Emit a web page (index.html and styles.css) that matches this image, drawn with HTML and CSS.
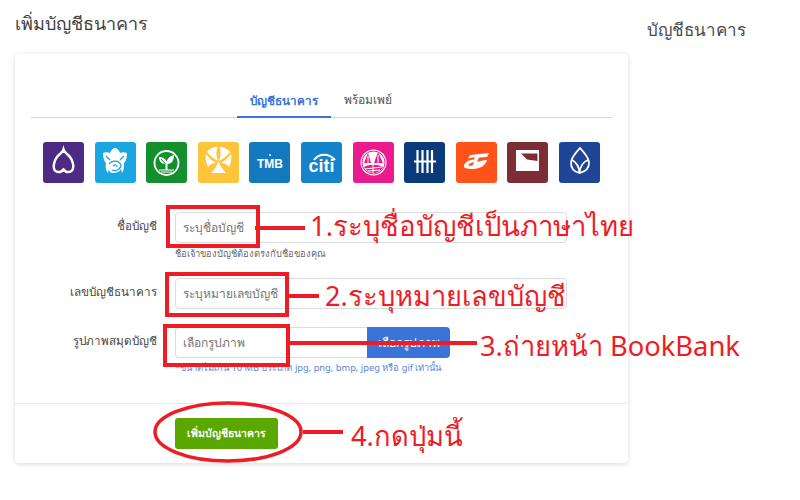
FILE: index.html
```html
<!DOCTYPE html>
<html lang="th">
<head>
<meta charset="utf-8">
<title>เพิ่มบัญชีธนาคาร</title>
<link rel="stylesheet" href="styles.css">
</head>
<body>
<div class="page">
  <main class="main">
    <h1 class="title">เพิ่มบัญชีธนาคาร</h1>
    <section class="card">
      <div class="card-body">
        <nav class="tabs">
          <a class="tab tab-active">บัญชีธนาคาร</a>
          <a class="tab tab-next">พร้อมเพย์</a>
        </nav>
        <div class="banks">
          <div class="bank b-scb"><svg viewBox="0 0 41 41"><path class="ol" d="M20.500 7.500 C21.500 11 25 12 27 15 C29.500 18 31 24 30 26.500 C29.300 29 27.500 30 25 30 L23.500 30 L20.500 27.500 L17.500 30 L16 30 C13.500 30 11.700 29 11 26.500 C10 24 11.500 18 14 15 C16 12 19.500 11 20.500 7.500Z"/></svg></div>
          <div class="bank b-ktb"><svg viewBox="0 0 41 41"><path class="fl" d="M20 6 C22 6 24 8 25 11 C27 10 30 10 32 11 C32 16 31 19 29 21 C29 25 29 28 27 31 L26 27 C24 30 22 31 18 31 C15 31 14 29 14 27 L13 31 C11 29 10 25 11 21 C9 19 8 15 8 11 C10 10 13 10 15 11 C16 8 18 6 20 6Z"/><path class="ln-blue" d="M14 22 C17 18 24 18 26 23 C26 27 21 30 17 28 M18 24 C20 22 22 23 22 25 M11 14 L15 18 M29 14 L25 18"/></svg></div>
          <div class="bank b-kbank"><svg viewBox="0 0 41 41"><circle class="ol ol-thin" cx="20.500" cy="21" r="12"/><path class="fl" d="M19.500 28 L19.500 22 C15 22 13 19 13 15 C17 15 20 17 20.500 20 C21 17 24 14 28 13 C28 18 26 22 21.500 22 L21.500 28Z"/><path class="ln-white" d="M13 28 L28 28 M15 30 L26 30"/><path class="ln-green" d="M15 17 L19.500 22"/></svg></div>
          <div class="bank b-krungsri"><svg viewBox="0 0 41 41"><path class="fl" d="M19.500 5 C15 5 11 7 9 10 C12 14 16 17 20 19 C18 14 18 9 19.500 5Z M21.500 5 C26 5 30 7 32 10 C29 14 25 17 21 19 C23 14 23 9 21.500 5Z M8 12 C11 16 14 19 18 21 C14 21 11 23 10 25 C8 21 7 16 8 12Z M33 12 C30 16 27 19 23 21 C27 21 30 23 31 25 C33 21 34 16 33 12Z M20.500 19 C22 24 25 28 28 31 L13 31 C16 28 19 24 20.500 19Z"/></svg></div>
          <div class="bank b-tmb"><span class="logo-tmb">TMB</span></div>
          <div class="bank b-citi"><svg class="citi-arc" viewBox="0 0 41 41"><path class="arc" d="M13 18 C18 11 28 11 34 18"/></svg><span class="logo-citi">citi</span></div>
          <div class="bank b-gsb"><svg viewBox="0 0 41 41"><circle class="fl" cx="20.500" cy="20.500" r="13"/><circle class="pk-line" cx="20.500" cy="20.500" r="11.500"/><path class="pk" d="M15 11 L18 21 L11 21Z M25 10 L30 21 L21 21Z M11 25 C16 22 25 22 30 25 C28 29 24 31 20.500 31 C16 31 13 28 11 25Z"/><path class="ln-white" d="M12 27 L29 25 M15 29 L27 28 M20 23 L20 31 M15 14 L15 21 M25 13 L25 21"/></svg></div>
          <div class="bank b-scsb"><svg viewBox="0 0 41 41"><path class="bars" d="M13.500 8 L13.500 31 M18.500 8 L18.500 31 M23.500 8 L23.500 31 M28 8 L28 31 M10 19.500 L32 19.500"/></svg></div>
          <div class="bank b-ttb"><svg viewBox="0 0 41 41"><path class="fl" d="M14 13 L33 11 L31 15 L23 15.500 L21 20 C26 18.500 29 18 31 18 C30 23 24 27 17 27 C11 27 7 26 8 24 C8 21 12 18 18 17.500 L19 15.500 C16 15.500 14 16 12 16.500Z"/><path class="or" d="M12 23 C14 21 15.500 20.500 18 20 L16.500 23.500 C15 24 13 24 12 23Z"/></svg></div>
          <div class="bank b-red"><svg viewBox="0 0 41 41"><rect class="fl" x="9" y="8" width="23" height="21"/><path class="dk" d="M14 11.500 L30.500 11.500 L30.500 19 L20 17.500Z"/></svg></div>
          <div class="bank b-bbl"><svg viewBox="0 0 41 41"><path class="ol ol-thin" d="M21 6 C25 11 30 15 30 21 C30 27 25 30 20.500 31 C16 30 12 27 12 21 C12 15 17 11 21 6Z M13 18 C17 20 20 24 20.500 31 C21 24 24 20 29 18"/></svg></div>
        </div>
        <form class="form">
          <label class="label">ชื่อบัญชี</label>
          <div class="field">
            <input class="input" type="text" placeholder="ระบุชื่อบัญชี">
            <p class="help">ชื่อเจ้าของบัญชีต้องตรงกับชื่อของคุณ</p>
          </div>
          <label class="label">เลขบัญชีธนาคาร</label>
          <div class="field">
            <input class="input" type="text" placeholder="ระบุหมายเลขบัญชี">
          </div>
          <label class="label">รูปภาพสมุดบัญชี</label>
          <div class="field">
            <div class="upload">
              <input class="input input-file" type="text" placeholder="เลือกรูปภาพ">
              <button class="btn-file" type="button">เลือกรูปภาพ</button>
            </div>
            <p class="help help-blue">*ขนาดไม่เกิน 10 MB ประเภท jpg, png, bmp, jpeg หรือ gif เท่านั้น</p>
          </div>
        </form>
      </div>
      <footer class="card-foot">
        <button class="btn-add" type="button">เพิ่มบัญชีธนาคาร</button>
      </footer>
    </section>
  </main>
  <aside class="side">บัญชีธนาคาร</aside>
</div>

<svg class="marks" viewBox="0 0 800 500">
  <rect class="m" x="168" y="207" width="90" height="39"/>
  <rect class="m" x="167" y="274" width="120" height="41"/>
  <rect class="m" x="165" y="326" width="123" height="39"/>
  <path class="m" d="M255 228 L305 228 M288 296 L319 296 M290 343 L477 343 M303 432 L343 432"/>
  <ellipse class="m m-thin" cx="228" cy="432" rx="73" ry="29"/>
</svg>
<span class="note n1">1.ระบุชื่อบัญชีเป็นภาษาไทย</span>
<span class="note n2">2.ระบุหมายเลขบัญชี</span>
<span class="note n3">3.ถ่ายหน้า BookBank</span>
<span class="note n4">4.กดปุ่มนี้</span>
</body>
</html>
```
FILE: styles.css
```css
* { box-sizing: border-box; }
html, body { margin: 0; padding: 0; background: #fff; }
body {
  width: 800px;
  height: 500px;
  overflow: hidden;
  position: relative;
  font-family: "Noto Sans", "Liberation Sans", "DejaVu Sans", sans-serif;
  color: #4a4a4a;
}
.page { display: flex; align-items: flex-start; padding: 0 0 0 15px; }
.main { width: 613px; }
.title { margin: 10px 0 0; height: 44px; font-size: 18px; font-weight: 400; line-height: 26px; color: #3f3f3f; }
.side { margin: 17px 0 0 19px; font-size: 17px; line-height: 26px; color: #4a4a4a; }

.card { height: 409px; background: #fff; border-radius: 4px; box-shadow: 0 1px 5px rgba(0,0,0,.16); display: flex; flex-direction: column; }
.card-body { height: 349px; padding: 0 16px; }
.tabs { height: 64px; border-bottom: 1px solid #d6d6d6; display: flex; justify-content: center; align-items: flex-end; padding-right: 4px; }
.tab { height: 33px; padding: 0 12px; margin-bottom: -1px; font-size: 12px; line-height: 30px; color: #555; }
.tab-next { padding: 0 11px 0 13px; }
.tab-active { width: 94px; text-align: center; color: #3b74d8; border-bottom: 2px solid #3b74d8; font-weight: 700; font-size: 11.700px; }

.banks { display: flex; justify-content: space-between; margin: 24px 12px 29px; }
.bank { width: 41px; height: 41px; border-radius: 3px; position: relative; display: flex; align-items: center; justify-content: center; overflow: hidden; }
.bank svg { display: block; width: 41px; height: 41px; }
.b-scb { background: #4e2a84; }
.b-ktb { background: #1ba5e1; }
.b-kbank { background: #138f2d; }
.b-krungsri { background: #fec43b; }
.b-tmb { background: #1279be; }
.b-citi { background: #1583c9; }
.b-gsb { background: #eb1a8e; }
.b-scsb { background: #0b3a7a; }
.b-ttb { background: #ff5319; }
.b-red { background: #7f2d35; }
.b-bbl { background: #1e4598; }
.ol { fill: none; stroke: #fff; stroke-width: 2.500; }
.ol-thin { stroke-width: 1.800; }
.fl { fill: #fff; }
.or { fill: #ff5319; }
.ln-blue { fill: none; stroke: #1ba5e1; stroke-width: 1.200; }
.ln-green { fill: none; stroke: #138f2d; stroke-width: 1; }
.ln-white { fill: none; stroke: #fff; stroke-width: 1; }
.pk { fill: #eb1a8e; }
.pk-line { fill: none; stroke: #eb1a8e; stroke-width: 1; }
.dk { fill: #7f2d35; }
.bars { fill: none; stroke: #fff; stroke-width: 2.200; }
.arc { fill: none; stroke: #fff; stroke-width: 2; }
.logo-tmb { position: relative; font: 700 12px "Liberation Sans", sans-serif; color: #fff; margin-top: 2px; }
.logo-tmb::before { content: ""; position: absolute; left: 12px; top: -3px; width: 2px; height: 2px; border-radius: 50%; background: #fff; }
.logo-citi { font: 700 18px "Liberation Sans", sans-serif; color: #fff; margin-top: 7px; }
.citi-arc { position: absolute; left: 0; top: 0; }

.form { display: grid; grid-template-columns: 126px 392px; column-gap: 18px; align-items: start; }
.label { font-size: 11.700px; line-height: 26px; text-align: right; color: #444; }
.field { margin-bottom: 18px; }
.input { display: block; width: 100%; height: 31px; padding: 0 7px; border: 1px solid #dcdcdc; border-radius: 4px; font: 12px "Noto Sans", "Liberation Sans", sans-serif; color: #555; background: #fff; outline: none; }
.input::placeholder { color: #757575; opacity: 1; }
.help { margin: 4px 0 -1px; font-size: 9.300px; line-height: 14px; color: #666; }
.help-blue { margin-top: 3px; color: #5b84d8; }
.upload { display: flex; width: 275px; }
.input-file { width: 192px; border-radius: 4px 0 0 4px; border-right: 0; flex: none; }
.btn-file { width: 83px; height: 31px; flex: none; border: 0; border-radius: 0 4px 4px 0; background: #3b74d8; color: #fff; font: 12px "Noto Sans", "Liberation Sans", sans-serif; padding: 0; }

.card-foot { flex: 1; border-top: 1px solid #e9e9e9; display: flex; justify-content: flex-start; padding: 14px 0 0 160px; }
.btn-add { width: 103px; height: 31px; border: 0; border-radius: 3px; background: #5aa700; color: #fff; font: 700 10.500px "Noto Sans", "Liberation Sans", sans-serif; padding: 0; }

.marks { position: absolute; left: 0; top: 0; width: 800px; height: 500px; pointer-events: none; }
.m { fill: none; stroke: #ee1c25; stroke-width: 4; }
.m-thin { stroke-width: 3.500; }
.note { position: absolute; font-family: "Noto Sans", "Liberation Sans", "DejaVu Sans", sans-serif; font-size: 27.300px; line-height: 36px; color: #ee1c25; white-space: nowrap; }
.n1 { left: 310px; top: 208px; font-size: 27.500px; }
.n2 { left: 325px; top: 278px; }
.n3 { left: 480px; top: 328px; }
.n4 { left: 351px; top: 418px; }
```
